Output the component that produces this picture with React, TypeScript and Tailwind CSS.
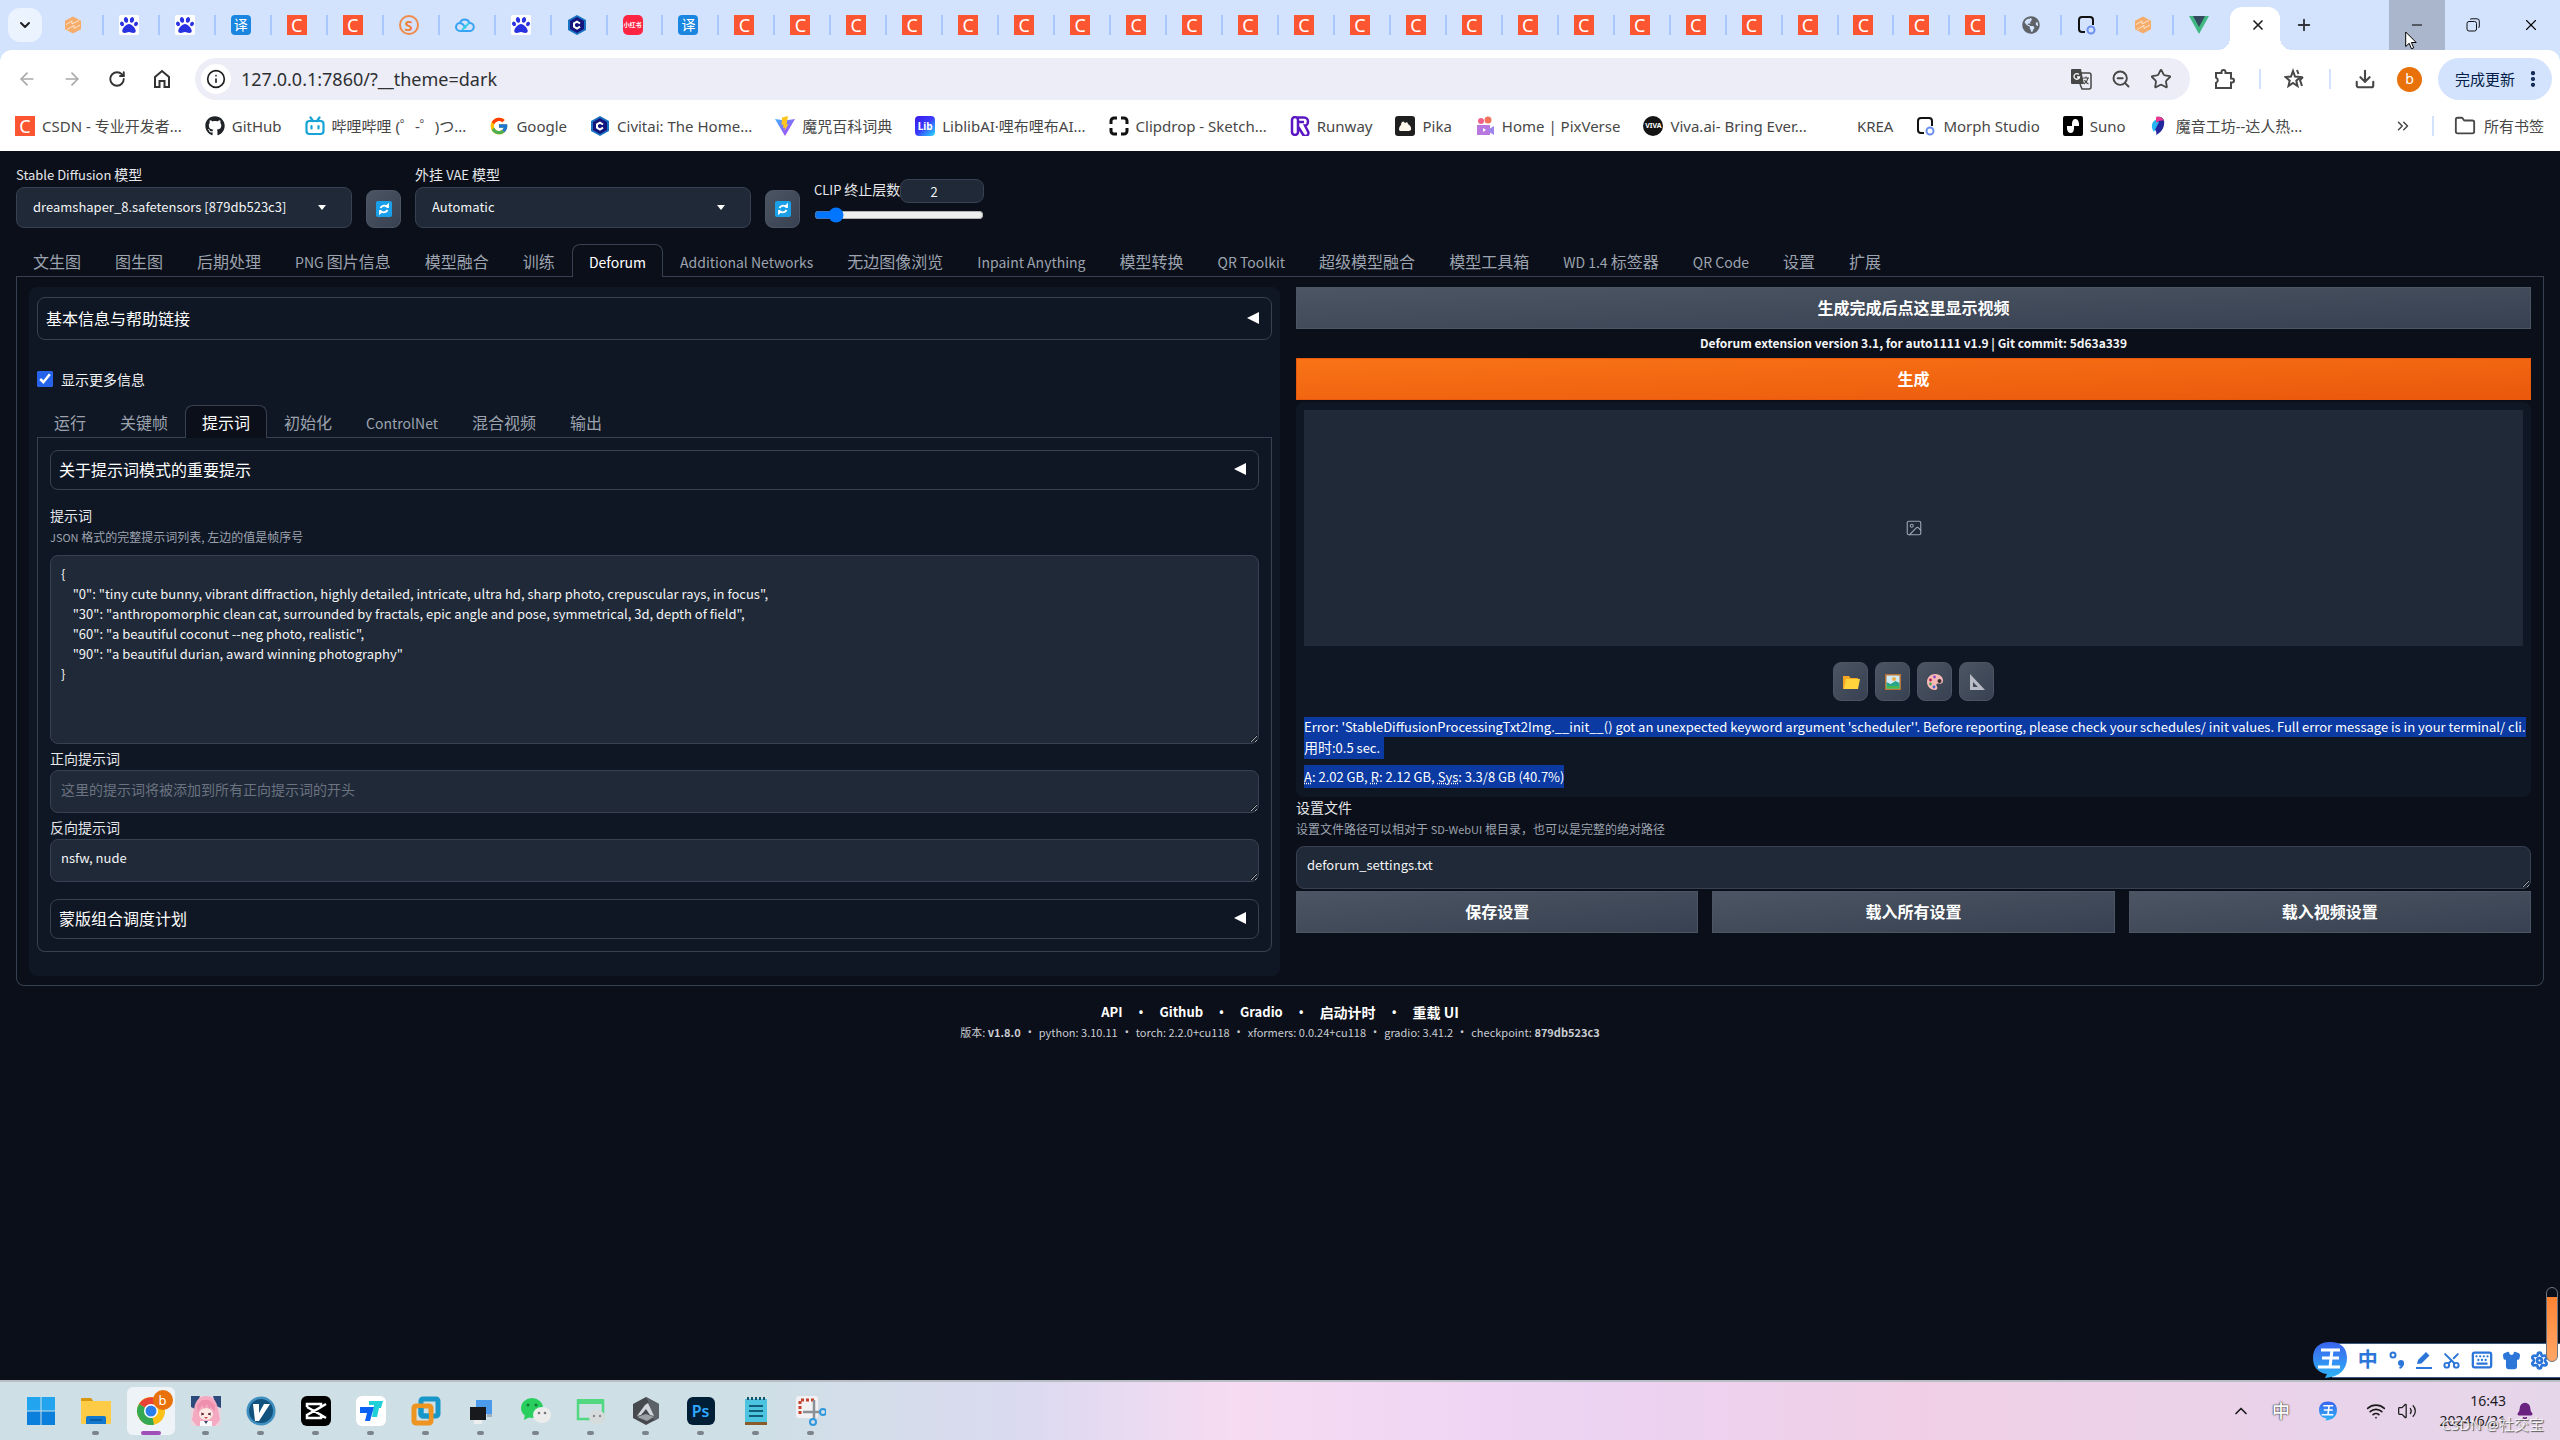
import { useState } from "react";
import type { ReactNode } from "react";
import {
  ArrowLeft,
  ArrowRight,
  Bell,
  ChevronDown,
  ChevronUp,
  ChevronsRight,
  Download,
  EllipsisVertical,
  Folder,
  Image as ImageIcon,
  Info,
  Keyboard,
  Minus,
  Plus,
  RotateCw,
  Scissors,
  Settings,
  Shirt,
  Star,
  Volume2,
  Wifi,
  X,
  ZoomOut,
} from "lucide-react";
import { FaGithub, FaPaw, FaGlobeAmericas } from "react-icons/fa";
import { FcGoogle } from "react-icons/fc";

/* ---------- favicons ---------- */

const CsdnIcon = () => (
  <span className="flex size-5 items-center justify-center bg-[#fc5531] text-[18px] leading-5 text-white">C</span>
);

const BaiduIcon = () => (
  <span className="flex size-5 items-center justify-center rounded-xs bg-white">
    <FaPaw className="size-[18px] text-[#2932e1]" />
  </span>
);

const TranslateFavicon = () => (
  <span className="flex size-5 items-center justify-center rounded-sm bg-[#1a86e0] text-[14px] leading-5 text-white">译</span>
);

const SIcon = () => (
  <span className="flex size-5 items-center justify-center rounded-full border-2 border-[#f08a4b] text-[15px] leading-4 font-bold text-[#f0813c]">S</span>
);

const OrangeHexIcon = () => (
  <svg viewBox="0 0 20 20" className="size-5">
    <path d="M10 1.500l8 4.300v8.400l-8 4.300-8-4.300V5.800z" fill="#f6ad6b" />
    <path d="M3 9.500l6-3.500v3l7-3.500M4 14.500l7-4v3l6-3.500" stroke="#fbe3cc" strokeWidth="1" fill="none" />
  </svg>
);

const CloudIcon = () => (
  <svg viewBox="0 0 20 20" className="size-5" fill="none" strokeWidth="2">
    <path d="M5 8a5 5 0 0 1 9.500 0a4 4 0 0 1 .5 8H5a4 4 0 0 1 0-8c3 0 4 3 6 5" stroke="#38a3f5" />
    <path d="M7 15l7-7" stroke="#35d0e6" />
  </svg>
);

const CivitaiIcon = () => (
  <svg viewBox="0 0 20 20" className="size-5">
    <path d="M10 0l9 5v10l-9 5-9-5V5z" fill="#1971c2" />
    <path d="M10 2l7 4v8l-7 4-7-4V6z" fill="#14157c" />
    <path d="M13 8.500L10 6.600 7 8.400v3.300l3 1.800 3-1.900" stroke="#fff" strokeWidth="2" fill="none" />
  </svg>
);

const RedBookIcon = () => (
  <span className="flex size-5 items-center justify-center rounded-[5px] bg-[#ff2442] text-[6px] leading-5 font-bold text-white">小红书</span>
);

const MorphIcon = () => (
  <svg viewBox="0 0 20 20" className="size-5" fill="none">
    <path d="M8 17H5a3 3 0 0 1-3-3V5a3 3 0 0 1 3-3h8a3 3 0 0 1 3 3v5" stroke="#111" strokeWidth="2" />
    <circle cx="14" cy="15" r="3.500" stroke="#6c8ff0" strokeWidth="2" />
  </svg>
);

const VueIcon = () => (
  <svg viewBox="0 0 20 20" className="size-5">
    <path d="M0 1h20L10 19z" fill="#41b883" />
    <path d="M4 1h12l-6 11z" fill="#35495e" />
  </svg>
);

const BilibiliIcon = () => (
  <svg viewBox="0 0 20 20" className="size-5" fill="none" stroke="#17a3d6" strokeWidth="2.200" strokeLinecap="round">
    <rect x="1.500" y="5" width="17" height="13" rx="3" />
    <path d="M5.500 1.500L8 5M14.500 1.500L12 5M6.500 10v2.500M13.500 10v2.500" />
  </svg>
);

const ViteIcon = () => (
  <svg viewBox="0 0 20 20" className="size-5">
    <defs>
      <linearGradient id="vite" x1="0" y1="0" x2="1" y2="1">
        <stop offset="0" stopColor="#41b1ff" />
        <stop offset="1" stopColor="#bd34fe" />
      </linearGradient>
    </defs>
    <path d="M0 3l10 1.500L20 3 10 20z" fill="url(#vite)" />
    <path d="M13 0L7 1.500 6.500 9l2-.5L8 12l2-.5L9.500 15l4-7-2 .5z" fill="#ffc51f" />
  </svg>
);

const LibIcon = () => (
  <span className="flex size-5 items-center justify-center rounded-sm bg-linear-to-br from-[#3a16e8] via-[#3b3bff] to-[#35d6ff] text-[10px] leading-5 font-bold text-white">Lib</span>
);

const ClipdropIcon = () => (
  <svg viewBox="0 0 20 20" className="size-5" fill="none" stroke="#111" strokeWidth="3">
    <path d="M2 8V5a3 3 0 0 1 3-3h3M12 2h3a3 3 0 0 1 3 3v3M18 12v3a3 3 0 0 1-3 3h-3M8 18H5a3 3 0 0 1-3-3v-3" />
  </svg>
);

const RunwayIcon = () => (
  <svg viewBox="0 0 20 20" className="size-5" fill="none" stroke="#5b17c4" strokeWidth="2.500">
    <path d="M2 4a3 3 0 0 1 6 0v12a3 3 0 0 1-6 0zM6 1.500h8a4 4 0 0 1 4 4c0 3-2 4-3 4l3 6a2.500 2.500 0 0 1-5 3l-5-8M8 6h6" />
  </svg>
);

const PikaIcon = () => (
  <svg viewBox="0 0 20 20" className="size-5">
    <rect width="20" height="20" rx="3" fill="#1f1f1f" />
    <path d="M4 14c0-3 1-4 2-5 0-2 1-3.500 2.500-3.500L10 7l2-1 1.500 2.500c2 1 3 3 2.500 5.500l-2 1H5z" fill="#fff6ec" />
  </svg>
);

const PixVerseIcon = () => (
  <svg viewBox="0 0 20 20" className="size-5">
    <circle cx="6" cy="5" r="3" fill="#f0628a" />
    <circle cx="13" cy="4" r="3.500" fill="#f2745e" />
    <path d="M2 9h13v10H2z" fill="#b778e0" />
    <path d="M14 13l5-3v9l-5-3z" fill="#9c86ec" />
    <path d="M8 12l3 2-3 2z" fill="#fff" />
  </svg>
);

const VivaIcon = () => (
  <span className="flex size-5 items-center justify-center rounded-full bg-[#141414] text-[7px] leading-5 font-bold text-white">VIVA</span>
);

const SunoIcon = () => (
  <svg viewBox="0 0 20 20" className="size-5">
    <rect width="20" height="20" rx="2" fill="#000" />
    <path d="M9 10V8c0-3 1-5 3.500-5S16 6 16 8v2zM4 10h7v2c0 3-1 5-3.500 5S4 14 4 12z" fill="#fff" />
  </svg>
);

const MoyinIcon = () => (
  <svg viewBox="0 0 20 20" className="size-5">
    <path d="M8 1c6-1 8 3 7 8s-4 8-8 10c2-5-4-6-2-10z" fill="#21279c" />
    <path d="M6 4c-4 3-4 8-1 12l5-10z" fill="#25b5f2" />
    <path d="M7 1c5-1 7 1 8 4-3-1-6 0-8 2z" fill="#e8388f" />
  </svg>
);

const TABS: (() => ReactNode)[] = [
  OrangeHexIcon,
  BaiduIcon,
  BaiduIcon,
  TranslateFavicon,
  CsdnIcon,
  CsdnIcon,
  SIcon,
  CloudIcon,
  BaiduIcon,
  CivitaiIcon,
  RedBookIcon,
  TranslateFavicon,
  ...Array.from({ length: 23 }, () => CsdnIcon),
  () => <FaGlobeAmericas className="size-[18px] text-[#5f6368]" />,
  MorphIcon,
  OrangeHexIcon,
  VueIcon,
];

const BOOKMARKS: { label: string; icon: () => ReactNode }[] = [
  { label: "CSDN - 专业开发者...", icon: CsdnIcon },
  { label: "GitHub", icon: () => <FaGithub className="size-5 text-[#1f2328]" /> },
  { label: "哔哩哔哩 (゜-゜)つ...", icon: BilibiliIcon },
  { label: "Google", icon: () => <FcGoogle className="size-5" /> },
  { label: "Civitai: The Home...", icon: CivitaiIcon },
  { label: "魔咒百科词典", icon: ViteIcon },
  { label: "LiblibAI·哩布哩布AI...", icon: LibIcon },
  { label: "Clipdrop - Sketch...", icon: ClipdropIcon },
  { label: "Runway", icon: RunwayIcon },
  { label: "Pika", icon: PikaIcon },
  { label: "Home | PixVerse", icon: PixVerseIcon },
  { label: "Viva.ai- Bring Ever...", icon: VivaIcon },
  { label: "KREA", icon: () => <span className="size-5" /> },
  { label: "Morph Studio", icon: MorphIcon },
  { label: "Suno", icon: SunoIcon },
  { label: "魔音工坊--达人热...", icon: MoyinIcon },
];

/* ---------- browser chrome ---------- */

function TabStrip() {
  return (
    <div className="flex h-[50px] items-stretch bg-[#d3e3fd]">
      <button className="ml-2 flex size-[34px] items-center justify-center self-center rounded-xl bg-[#ebf3fe]" aria-label="搜索标签页">
        <ChevronDown className="size-4 text-[#1f1f1f]" strokeWidth={3} />
      </button>
      <div className="ml-1.5 flex flex-1 items-center">
        {TABS.map((Icon, i) => (
          <button
            key={i}
            className={`flex h-5 flex-1 items-center justify-center border-r-2 pr-1 ${
              i === TABS.length - 1 ? "border-transparent" : "border-[#a8c7fa]"
            }`}
            aria-label={`标签页 ${i + 1}`}
          >
            <Icon />
          </button>
        ))}
      </div>
      <div className="relative mt-[7px] flex w-[50px] items-center justify-end rounded-t-xl bg-white pr-3.5 pb-[7px]">
        <span className="absolute bottom-0 -left-3 size-3 bg-[radial-gradient(circle_at_0_0,transparent_12px,white_12px)]" />
        <span className="absolute -right-3 bottom-0 size-3 bg-[radial-gradient(circle_at_100%_0,transparent_12px,white_12px)]" />
        <button aria-label="关闭标签页">
          <X className="size-4 text-[#1f1f1f]" strokeWidth={2.5} />
        </button>
      </div>
      <button className="flex w-12 items-center justify-center" aria-label="新标签页">
        <Plus className="size-[18px] text-[#30353b]" strokeWidth={2.5} />
      </button>
      <div className="ml-[61px] flex">
        <button className="flex w-14 items-center justify-center bg-[#a9b6cb]" aria-label="最小化">
          <Minus className="size-4 text-black" strokeWidth={1.5} />
        </button>
        <button className="flex w-14 items-center justify-center" aria-label="还原">
          <svg viewBox="0 0 14 14" className="size-3.5" fill="none" stroke="#111">
            <rect x="1" y="3.500" width="9.500" height="9.500" rx="2" />
            <path d="M4 1.500C4.500 1 5 .8 6 .8h5a2.300 2.300 0 0 1 2.300 2.300V8c0 1-.3 1.500-.8 2" />
          </svg>
        </button>
        <button className="flex w-[59px] items-center justify-center" aria-label="关闭">
          <X className="size-[18px] text-black" strokeWidth={1.5} />
        </button>
      </div>
    </div>
  );
}

const NAV_ICON = "flex h-10 w-[45px] items-center justify-center";
const BAR_ICON = "flex size-10 items-center justify-center text-[#474747]";

function Toolbar() {
  return (
    <div className="bg-[#d3e3fd]">
      <div className="flex h-[58px] items-center rounded-t-xl bg-white pl-1">
        <button className={NAV_ICON} aria-label="后退"><ArrowLeft className="size-5 text-[#a9a9a9]" /></button>
        <button className={NAV_ICON} aria-label="前进"><ArrowRight className="size-5 text-[#a9a9a9]" /></button>
        <button className={NAV_ICON} aria-label="重新加载"><RotateCw className="size-[18px] text-[#333]" strokeWidth={2.5} /></button>
        <button className={NAV_ICON} aria-label="主页">
          <svg viewBox="0 0 20 20" className="size-5" fill="none" stroke="#333" strokeWidth="2">
            <path d="M3 8l7-6 7 6v10h-4.500v-6h-5v6H3z" />
          </svg>
        </button>

        <div className="ml-[11px] flex h-[42px] flex-1 items-center rounded-full bg-[#ededf7] pr-[9px] pl-1.5">
          <span className="flex size-[30px] items-center justify-center rounded-full bg-white">
            <Info className="size-5 text-[#1f1f1f]" />
          </span>
          <input
            className="ml-2.5 flex-1 bg-transparent text-[18px] leading-6 text-[#2e3033] outline-none"
            defaultValue="127.0.0.1:7860/?__theme=dark"
            aria-label="地址和搜索栏"
          />
          <button className={BAR_ICON} aria-label="翻译">
            <svg viewBox="0 0 22 22" className="size-[22px]">
              <path d="M2 1h9l3 15H2a1 1 0 0 1-1-1V2a1 1 0 0 1 1-1z" fill="#474747" />
              <path d="M11 5h8a2 2 0 0 1 2 2v12a2 2 0 0 1-2 2h-7l-2-5" fill="none" stroke="#474747" strokeWidth="1.500" />
              <path d="M8.800 6.500A2.800 2.800 0 1 0 9.500 9H7" fill="none" stroke="#fff" strokeWidth="1.300" />
              <path d="M13 10h6M16 8.500V10M18 10c-.5 3-2 4.500-4 6M14.500 12c1 2 2 3 4 4" fill="none" stroke="#474747" strokeWidth="1.200" />
            </svg>
          </button>
          <button className={BAR_ICON} aria-label="缩放"><ZoomOut className="size-5" strokeWidth={2.3} /></button>
          <button className={BAR_ICON} aria-label="为此标签页添加书签">
            <Star className="size-[22px]" strokeLinejoin="miter" />
          </button>
        </div>

        <button className={`${BAR_ICON} ml-[15px]`} aria-label="扩展程序">
          <svg viewBox="0 0 22 22" className="size-[22px]" fill="none" stroke="currentColor" strokeWidth="2">
            <path d="M2 5h5.500V4a2 2 0 0 1 4 0v1H17v5.500h1a2 2 0 0 1 0 4h-1V20H2v-5a3 3 0 0 0 0-5.500z" />
          </svg>
        </button>
        <span className="mx-3.5 h-5 w-0.5 bg-[#d3e3fd]" />
        <button className={BAR_ICON} aria-label="收藏">
          <svg viewBox="0 0 22 22" className="size-[22px]" fill="none" stroke="currentColor" strokeWidth="2">
            <path d="M9 3l2 5.500 5.500.5-4.200 3.700L13.500 18 9 15l-4.500 3 1.200-5.300L1.500 9 7 8.500z" />
            <path d="M13 2l1.500 4M19 9l-3 3 2 6" />
          </svg>
        </button>
        <span className="mx-3.5 h-5 w-0.5 bg-[#d3e3fd]" />
        <button className={BAR_ICON} aria-label="下载内容"><Download className="size-[22px]" strokeWidth={2.3} /></button>
        <button className="ml-3 size-[25px] rounded-full bg-[#e8710a] text-[14px] leading-6 text-white" aria-label="个人资料">b</button>
        <button className="mr-2 ml-4 flex h-[42px] w-[114px] items-center justify-center gap-2 rounded-full bg-[#d3e3fd] text-[15px] leading-5 text-[#041e49]">
          完成更新
          <EllipsisVertical className="-mr-2 size-5" strokeWidth={3} />
        </button>
      </div>
    </div>
  );
}

function BookmarksBar() {
  return (
    <nav className="flex h-[43px] items-center bg-white pr-4 pb-[7px] pl-[15px] text-[15px] leading-5 text-[#474747]">
      <div className="flex flex-1 items-center gap-[23px]">
        {BOOKMARKS.map(({ label, icon: Icon }) => (
          <a key={label} href="#" className="flex items-center gap-[7px] whitespace-nowrap">
            <Icon />
            {label}
          </a>
        ))}
      </div>
      <button aria-label="更多书签"><ChevronsRight className="size-[18px]" /></button>
      <span className="mx-5 h-5 w-0.5 bg-[#d3e3fd]" />
      <a href="#" className="flex items-center gap-2 whitespace-nowrap">
        <Folder className="size-[22px]" />
        所有书签
      </a>
    </nav>
  );
}

/* ---------- web ui ---------- */

const MAIN_TABS = [
  "文生图",
  "图生图",
  "后期处理",
  "PNG 图片信息",
  "模型融合",
  "训练",
  "Deforum",
  "Additional Networks",
  "无边图像浏览",
  "Inpaint Anything",
  "模型转换",
  "QR Toolkit",
  "超级模型融合",
  "模型工具箱",
  "WD 1.4 标签器",
  "QR Code",
  "设置",
  "扩展",
];

const DEFORUM_TABS = ["运行", "关键帧", "提示词", "初始化", "ControlNet", "混合视频", "输出"];

const PROMPTS = `{
    "0": "tiny cute bunny, vibrant diffraction, highly detailed, intricate, ultra hd, sharp photo, crepuscular rays, in focus",
    "30": "anthropomorphic clean cat, surrounded by fractals, epic angle and pose, symmetrical, 3d, depth of field",
    "60": "a beautiful coconut --neg photo, realistic",
    "90": "a beautiful durian, award winning photography"
}`;

const LABEL = "block pb-1 text-sm leading-4 text-gray-200";
const FIELD =
  "block w-full resize-y rounded-lg border border-[#374151] bg-[#1f2937] px-2.5 pt-2 leading-5 text-gray-100 placeholder:text-[#6b7280] outline-none";
const SECONDARY =
  "h-[42px] w-full border border-[#4b5563] bg-linear-to-br from-[#4b5563] to-[#374151] pb-0.5 text-base leading-6 font-semibold text-white";
const TOOL =
  "flex w-[35px] items-center justify-center rounded-lg border border-[#4b5563] bg-linear-to-br from-[#4b5563] to-[#374151]";

/* the CJK face draws its latin letters large, so latin runs are set smaller */
function Mixed({ text, latin }: { text: string; latin: string }) {
  return (
    <>
      {text.split(/([!-~][ -~]*)/).map((run, i) =>
        i % 2 ? (
          <span key={i} className={latin}>
            {run}
          </span>
        ) : (
          run
        )
      )}
    </>
  );
}

function TabNav({ tabs, initial }: { tabs: string[]; initial: string }) {
  const [active, setActive] = useState(initial);
  return (
    <div className="flex border-b border-[#374151]" role="tablist">
      {tabs.map((tab) => (
        <button
          key={tab}
          role="tab"
          aria-selected={tab === active}
          onClick={() => setActive(tab)}
          className={`-mb-px h-[33px] rounded-t-lg border border-b-0 px-4 text-base leading-6 whitespace-nowrap ${
            tab === active ? "border-[#374151] bg-[#0b0f19] text-white" : "border-transparent text-[#9ca3af]"
          }`}
        >
          <Mixed text={tab} latin="text-sm" />
        </button>
      ))}
    </div>
  );
}

function Accordion({ title, className }: { title: string; className: string }) {
  return (
    <button className={`flex w-full items-center justify-between rounded-lg border border-[#374151] px-2 pb-0.5 text-base leading-6 text-white ${className}`}>
      {title}
      <svg viewBox="0 0 12 12" className="mr-1 size-3">
        <path d="M12 0v12L0 6z" fill="#fff" />
      </svg>
    </button>
  );
}

function ModelSelect({ id, label, value }: { id: string; label: string; value: string }) {
  return (
    <div className="flex items-end gap-[14px]">
      <div className="w-[336px]">
        <label htmlFor={id} className={LABEL}>
          <Mixed text={label} latin="text-[13px]" />
        </label>
        <div className="relative">
          <select
            id={id}
            className="block h-[41px] w-full appearance-none rounded-lg border border-[#374151] bg-[#1f2937] px-4 pb-0.5 text-[13px] leading-5 text-gray-100"
          >
            <option>{value}</option>
          </select>
          <svg viewBox="0 0 8 5" className="pointer-events-none absolute top-[18px] right-[26px] h-[5px] w-2">
            <path d="M0 0h8L4 5z" fill="#fff" />
          </svg>
        </div>
      </div>
      <button className={`${TOOL} h-[38px]`} aria-label="刷新">
        <svg viewBox="0 0 16 16" className="size-4">
          <rect width="16" height="16" rx="2" fill="#1aa0e8" />
          <path d="M12 7V4L10.500 5.500A4 4 0 0 0 4.500 7M4 9v3l1.500-1.500A4 4 0 0 0 11.500 9" fill="none" stroke="#fff" strokeWidth="1.800" />
        </svg>
      </button>
    </div>
  );
}

function QuickSettings() {
  const [clip, setClip] = useState(2);
  return (
    <div className="flex items-end gap-[14px] px-4 pt-[15px]">
      <ModelSelect id="sd-model" label="Stable Diffusion 模型" value="dreamshaper_8.safetensors [879db523c3]" />
      <ModelSelect id="vae-model" label="外挂 VAE 模型" value="Automatic" />
      <div className="w-[170px] pb-[5px]">
        <div className="flex items-center">
          <label htmlFor="clip" className="w-[86px] pb-1 text-sm leading-4 whitespace-nowrap text-gray-200">
            <Mixed text="CLIP 终止层数" latin="text-[13px]" />
          </label>
          <input
            className="h-6 w-[84px] rounded-lg border border-[#374151] bg-[#1f2937] pr-4 text-center text-[13px] leading-5 text-gray-100"
            value={clip}
            onChange={(e) => setClip(Number(e.target.value) || 1)}
            aria-label="CLIP 终止层数"
          />
        </div>
        <input
          id="clip"
          type="range"
          min={1}
          max={12}
          value={clip}
          onChange={(e) => setClip(Number(e.target.value))}
          className="mt-1 block h-4 w-full"
        />
      </div>
    </div>
  );
}

function PromptPanel() {
  return (
    <div className="rounded-b-lg border border-t-0 border-[#374151] p-3">
      <Accordion title="关于提示词模式的重要提示" className="h-10" />
      <label htmlFor="prompts" className={`${LABEL} mt-[17px]`}>提示词</label>
      <p className="text-xs leading-5 text-[#9ca3af]">
        <Mixed text="JSON" latin="text-[11px]" /> 格式的完整提示词列表, 左边的值是帧序号
      </p>
      <textarea id="prompts" className={`${FIELD} mt-2 h-[189px] text-[13px]`} defaultValue={PROMPTS} spellCheck={false} />
      <label htmlFor="positive" className={`${LABEL} mt-1.5`}>正向提示词</label>
      <textarea id="positive" className={`${FIELD} h-[43px] text-sm`} placeholder="这里的提示词将被添加到所有正向提示词的开头" />
      <label htmlFor="negative" className={`${LABEL} mt-1.5`}>反向提示词</label>
      <textarea id="negative" className={`${FIELD} h-[43px] text-[13px]`} defaultValue="nsfw, nude" spellCheck={false} />
      <Accordion title="蒙版组合调度计划" className="mt-[17px] h-10" />
    </div>
  );
}

/* folder, picture, palette and triangle shortcuts under the gallery */
const GALLERY_TOOLS = [
  {
    label: "打开输出目录",
    icon: (
      <svg viewBox="0 0 18 18" className="size-[18px]">
        <path d="M1 3h6l1.500 2H16v11H1z" fill="#f5a623" />
        <path d="M4 6h14l-2 10H2z" fill="#ffd33c" />
      </svg>
    ),
  },
  {
    label: "发送到图生图",
    icon: (
      <svg viewBox="0 0 18 18" className="size-[18px]">
        <rect x="1" y="1" width="16" height="16" fill="#b87333" />
        <rect x="2.500" y="2.500" width="13" height="13" fill="#cfeaf7" />
        <circle cx="10" cy="6" r="2" fill="#f3b04a" />
        <path d="M2.500 9l4 2 5-3 4 2v5.500h-13z" fill="#28a58a" />
        <path d="M2.500 13h13v2.500h-13z" fill="#47b84c" />
      </svg>
    ),
  },
  {
    label: "发送到重绘",
    icon: (
      <svg viewBox="0 0 18 18" className="size-[18px]">
        <path d="M9 1c5 0 8 3 8 6.500 0 3-2 3.500-4 3-3-.5-3 1.500-2 3s0 3.500-2 3.500c-5 0-8-4-8-8s3-8 8-8z" fill="#f6b9b4" />
        <circle cx="4.500" cy="7" r="1.400" fill="#b0174f" />
        <circle cx="8.500" cy="4" r="1.400" fill="#8d46c9" />
        <circle cx="4.500" cy="11" r="1.400" fill="#46a556" />
        <circle cx="8" cy="14" r="1.400" fill="#3d65dc" />
        <circle cx="13.500" cy="8" r="2" fill="#3a2c33" />
      </svg>
    ),
  },
  {
    label: "发送到后期处理",
    icon: (
      <svg viewBox="0 0 18 18" className="size-[18px]">
        <path d="M2 1l15 16H2zM5 9v5h5z" fill="#b9bcc6" fillRule="evenodd" />
      </svg>
    ),
  },
];

function OutputColumn() {
  return (
    <div className="min-w-0">
      <button className={SECONDARY}>生成完成后点这里显示视频</button>
      <p className="flex h-[29px] items-center justify-center pb-0.5 text-xs leading-5 font-semibold text-gray-100">
        Deforum extension version 3.1, for auto1111 v1.9 | Git commit: 5d63a339
      </p>
      <button className="h-[42px] w-full border border-[#ea580c] bg-linear-to-br from-[#f97316] to-[#ea580c] pb-0.5 text-base leading-6 font-semibold text-white">
        生成
      </button>

      <div className="mt-0.5 rounded-lg bg-[#101724] px-2 pt-2 pb-[9px]">
        <div className="flex h-[236px] items-center justify-center bg-[#1f2937]">
          <ImageIcon className="size-[18px] text-[#9ca3af]" strokeWidth={1.5} />
        </div>
        <div className="mt-4 flex justify-center gap-[7px]">
          {GALLERY_TOOLS.map((tool) => (
            <button key={tool.label} aria-label={tool.label} className={`${TOOL} h-[39px]`}>
              {tool.icon}
            </button>
          ))}
        </div>
        <div className="mt-4 flex flex-col items-start text-[13px] whitespace-nowrap text-white">
          <p className="bg-[#0b3aa3] leading-5">
            Error: 'StableDiffusionProcessingTxt2Img.__init__() got an unexpected keyword argument 'scheduler''. Before
            reporting, please check your schedules/ init values. Full error message is in your terminal/ cli.
          </p>
          <p className="bg-[#0b3aa3] pr-1 leading-[22px]">
            <span className="text-sm">用时</span>:0.5 sec.
          </p>
          <p className="mt-1.5 bg-[#0b3aa3] leading-[23px]">
            <abbr className="underline decoration-dotted">A</abbr>: 2.02 GB, <abbr className="underline decoration-dotted">R</abbr>: 2.12
            GB, <abbr className="underline decoration-dotted">Sys</abbr>: 3.3/8 GB (40.7%)
          </p>
        </div>
      </div>

      <label htmlFor="settings-file" className={`${LABEL} mt-0.5`}>设置文件</label>
      <p className="text-xs leading-5 text-[#9ca3af]">
        设置文件路径可以相对于 <Mixed text="SD-WebUI" latin="text-[11px]" /> 根目录，也可以是完整的绝对路径
      </p>
      <textarea
        id="settings-file"
        className={`${FIELD} mt-[7px] h-[43px] text-[13px]`}
        defaultValue="deforum_settings.txt"
        spellCheck={false}
      />
      <div className="mt-0.5 grid grid-cols-3 gap-[14px]">
        <button className={SECONDARY}>保存设置</button>
        <button className={SECONDARY}>载入所有设置</button>
        <button className={SECONDARY}>载入视频设置</button>
      </div>
    </div>
  );
}

const Dot = () => <span className="font-['Noto_Sans',sans-serif]">•</span>;

function WebUi() {
  return (
    <main className="flex-1 bg-[#0b0f19] font-['Noto_Sans_CJK_SC',sans-serif]">
      <QuickSettings />
      <div className="mx-4 mt-4">
        <TabNav tabs={MAIN_TABS} initial="Deforum" />
        <div className="grid grid-cols-[1251fr_1235fr] gap-4 rounded-b-lg border border-t-0 border-[#374151] px-3 pt-2.5 pb-[9px]">
          <div className="rounded-lg bg-[#101724] px-2 pt-2.5 pb-6">
            <Accordion title="基本信息与帮助链接" className="h-[43px]" />
            <label className="mt-[29px] mb-4 flex items-center gap-2 text-sm leading-5 text-gray-100">
              <input type="checkbox" defaultChecked className="size-4 accent-[#2563eb]" />
              显示更多信息
            </label>
            <TabNav tabs={DEFORUM_TABS} initial="提示词" />
            <PromptPanel />
          </div>
          <OutputColumn />
        </div>
      </div>

      <footer className="mt-4 text-center text-white">
        <div className="flex justify-center gap-4 text-[13px] leading-5 font-semibold">
          <a href="#">API</a>
          <Dot />
          <a href="#">Github</a>
          <Dot />
          <a href="#">Gradio</a>
          <Dot />
          <a href="#" className="text-sm leading-5">启动计时</a>
          <Dot />
          <a href="#" className="text-sm leading-5">重载 UI</a>
        </div>
        <div className="flex justify-center gap-[7px] text-[11px] leading-5 text-[#c9ccd2]">
          <span>版本: <b>v1.8.0</b></span>
          <Dot />
          <span>python: 3.10.11</span>
          <Dot />
          <span>torch: 2.2.0+cu118</span>
          <Dot />
          <span>xformers: 0.0.24+cu118</span>
          <Dot />
          <span>gradio: 3.41.2</span>
          <Dot />
          <span>checkpoint: <b>879db523c3</b></span>
        </div>
      </footer>
    </main>
  );
}

/* ---------- desktop ---------- */

const APPS: { name: string; icon: ReactNode; running?: boolean; active?: boolean }[] = [
  {
    name: "开始",
    icon: (
      <svg viewBox="0 0 30 30" className="size-[30px]">
        <path d="M1 1h13.500v13.500H1zM15.500 1H29v13.500H15.500z" fill="#23a4ee" />
        <path d="M1 15.500h13.500V29H1zM15.500 15.500H29V29H15.500z" fill="#0a7fdb" />
      </svg>
    ),
  },
  {
    name: "文件资源管理器",
    running: true,
    icon: (
      <svg viewBox="0 0 30 30" className="size-[30px]">
        <path d="M0 3a1 1 0 0 1 1-1h9l3 4H0z" fill="#d9960f" />
        <path d="M0 5h29a1 1 0 0 1 1 1v21a1 1 0 0 1-1 1H1a1 1 0 0 1-1-1z" fill="#fdcb45" />
        <path d="M5 28v-6a2 2 0 0 1 2-2h16a2 2 0 0 1 2 2v6z" fill="#1277cf" />
        <path d="M9 24h12" stroke="#0c5ba5" strokeWidth="2" />
      </svg>
    ),
  },
  {
    name: "Google Chrome",
    active: true,
    icon: (
      <svg viewBox="0 0 30 30" className="size-[30px]">
        <circle cx="15" cy="15" r="14" fill="#fbc116" />
        <path d="M15 15L3 8a14 14 0 0 1 24 0z" fill="#ea4335" />
        <path d="M15 15l3 13.700A14 14 0 0 1 3 8z" fill="#34a853" />
        <path d="M15 15L27 8H15z" fill="#ea4335" />
        <circle cx="15" cy="15" r="7" fill="#fff" />
        <circle cx="15" cy="15" r="5.500" fill="#2b7de9" />
      </svg>
    ),
  },
  {
    name: "二次元",
    running: true,
    icon: (
      <svg viewBox="0 0 30 30" className="size-[30px]">
        <rect width="30" height="30" rx="2" fill="#e9d3df" />
        <path d="M0 0h9L4 13 0 11zM22 0h8v12l-5-2z" fill="#2c4a7c" />
        <path d="M3 14C4 3 10 0 15 0s11 3 12 14l2 10-5 6H6l-5-6z" fill="#f4a9c0" />
        <ellipse cx="15" cy="18" rx="7" ry="6" fill="#fdeae4" />
        <path d="M7 17c1-4 3-7 5-8l1 4 3-5 2 5 2-2c2 2 3 4 3 6l1-8-6-5H11L6 9z" fill="#ef8fae" />
        <path d="M10 17l3 1-3 1M20 17l-3 1 3 1" stroke="#6b2a3d" fill="none" />
        <path d="M13 21h4l-2 2z" fill="#cf3f55" />
        <path d="M9 25h12v5H9z" fill="#f8f8fb" />
        <path d="M13 25l2 3 2-3" fill="#32486e" />
      </svg>
    ),
  },
  {
    name: "V",
    running: true,
    icon: (
      <svg viewBox="0 0 30 30" className="size-[30px]">
        <circle cx="15" cy="15" r="14.500" fill="#3f8fc0" />
        <circle cx="15" cy="15" r="12" fill="#12527f" />
        <path d="M7 8h6v9l5-9h6L13 25H9z" fill="#fff" />
      </svg>
    ),
  },
  {
    name: "剪映",
    running: true,
    icon: (
      <svg viewBox="0 0 30 30" className="size-[30px]">
        <rect width="30" height="30" rx="6" fill="#000" />
        <path d="M6 11V8h14v3L6 19v3h14v-3L6 11M20 11l5-3M20 19l5 3" fill="none" stroke="#fff" strokeWidth="2.500" />
      </svg>
    ),
  },
  {
    name: "ToDesk",
    running: true,
    icon: (
      <svg viewBox="0 0 30 30" className="size-[30px]">
        <rect width="30" height="30" rx="6" fill="#fff" />
        <path d="M13 5h14l-2 7h-2l-2 9h-5l2-12h-5z" fill="#1fd0d8" />
        <path d="M4 11h14l-4 14H9l2-8H4z" fill="#0a62f5" />
      </svg>
    ),
  },
  {
    name: "VMware",
    running: true,
    icon: (
      <svg viewBox="0 0 30 30" className="size-[30px]" fill="none" strokeWidth="5">
        <rect x="10" y="3" width="17" height="17" rx="2" stroke="#1a97c9" />
        <rect x="3" y="10" width="17" height="17" rx="2" stroke="#ee9420" />
        <path d="M10 12v6a2 2 0 0 0 2 2h6" stroke="#1a97c9" />
      </svg>
    ),
  },
  {
    name: "远程桌面",
    running: true,
    icon: (
      <svg viewBox="0 0 30 30" className="size-[30px]">
        <path d="M10 4h16v14H10z" fill="#4b9aec" />
        <path d="M21 18h5v3h-5z" fill="#9fb0c0" />
        <path d="M4 11h16v13H4z" fill="#17191c" />
        <path d="M8 24h8v4H8z" fill="#eceef0" />
      </svg>
    ),
  },
  {
    name: "微信",
    running: true,
    icon: (
      <svg viewBox="0 0 30 30" className="size-[30px]">
        <ellipse cx="11" cy="12" rx="11" ry="10" fill="#28cf5e" />
        <path d="M4 18l-1 6 6-3z" fill="#28cf5e" />
        <circle cx="7" cy="9" r="1.500" fill="#0e7a33" />
        <circle cx="15" cy="9" r="1.500" fill="#0e7a33" />
        <ellipse cx="21" cy="19" rx="9" ry="8" fill="#ececec" />
        <circle cx="18" cy="17" r="1.300" fill="#777" />
        <circle cx="24" cy="17" r="1.300" fill="#777" />
      </svg>
    ),
  },
  {
    name: "微信窗口",
    running: true,
    icon: (
      <svg viewBox="0 0 30 30" className="size-[30px]">
        <path d="M2 5h25v18H2z" fill="none" stroke="#53d882" strokeWidth="2.500" />
        <path d="M1 3h27v5H1z" fill="#53d882" />
        <ellipse cx="21" cy="21" rx="8" ry="7" fill="#d8dbdb" />
        <circle cx="18" cy="20" r="1.200" fill="#888" />
        <circle cx="24" cy="20" r="1.200" fill="#888" />
      </svg>
    ),
  },
  {
    name: "启动器",
    running: true,
    icon: (
      <svg viewBox="0 0 30 30" className="size-[30px]">
        <path d="M15 1l13 7v14l-13 7-13-7V8z" fill="#46494e" />
        <path d="M15 1l13 7v14l-5 3-6-20z" fill="#5d6268" />
        <path d="M14 9l3-2 6 13-4-1-4-6-5 6-4 1z" fill="#d3d7db" />
        <path d="M6 21l9-3 8 3-7 4z" fill="#9aa0a6" />
      </svg>
    ),
  },
  {
    name: "Photoshop",
    running: true,
    icon: (
      <span className="flex size-[28px] items-center justify-center rounded-md bg-[#001e36] text-[16px] leading-7 font-semibold text-[#31a8ff]">Ps</span>
    ),
  },
  {
    name: "记事本",
    running: true,
    icon: (
      <svg viewBox="0 0 30 30" className="size-[30px]">
        <path d="M4 3h22v23H4z" fill="#4cc3df" />
        <path d="M4 26h22v3H4z" fill="#8a5a2b" />
        <path d="M7 1v3M11 1v3M15 1v3M19 1v3M23 1v3" stroke="#15536b" strokeWidth="2" />
        <path d="M8 10h14M8 15h14M8 20h14" stroke="#115e78" strokeWidth="2" />
      </svg>
    ),
  },
  {
    name: "截图工具",
    running: true,
    icon: (
      <svg viewBox="0 0 30 30" className="size-[30px]" fill="none">
        <rect x="0" y="0" width="22" height="22" rx="3" fill="#f1f1f3" />
        <path d="M4 18V4h14" stroke="#c5402c" strokeWidth="3" strokeDasharray="3 2" />
        <path d="M18 4v18M7 16h17" stroke="#8b9096" strokeWidth="2.500" />
        <circle cx="17" cy="26" r="3" stroke="#2f97de" strokeWidth="2" />
        <circle cx="27" cy="16" r="3" stroke="#2f97de" strokeWidth="2" />
      </svg>
    ),
  },
];

const ImeLogo = ({ className }: { className: string }) => (
  <svg viewBox="0 0 36 38" className={className}>
    <defs>
      <linearGradient id="ime" x1="0" y1="0" x2="0" y2="1">
        <stop offset="0" stopColor="#3a63ee" />
        <stop offset="1" stopColor="#2fb4f7" />
      </linearGradient>
    </defs>
    <path d="M18 1c11 0 17 6 17 16 0 12-8 19-22 20l2-4C6 32 1 26 1 17 1 7 7 1 18 1z" fill="url(#ime)" />
    <path d="M9 9h19M10 17h17M6 26h22M20 9l-2 17" stroke="#fff" strokeWidth="3" fill="none" />
  </svg>
);

function ImeBar() {
  return (
    <div className="absolute right-0 bottom-[61px] flex h-[38px] w-[248px] items-center text-[#2b76d8]">
      <ImeLogo className="z-10 h-[38px] w-9" />
      <div className="-ml-4 flex h-[35px] flex-1 items-center justify-around border-y border-[#3a5a80] bg-white pr-1.5 pl-5">
        <button className="w-[22px] text-[20px] leading-6 font-bold">中</button>
        <button aria-label="标点">
          <svg viewBox="0 0 18 18" className="size-[18px]" fill="none" stroke="currentColor" strokeWidth="2">
            <circle cx="5" cy="4" r="2.500" />
            <circle cx="13" cy="12" r="2" fill="currentColor" />
            <path d="M15 12c0 2-1 4-3.500 5" />
          </svg>
        </button>
        <button aria-label="手写">
          <svg viewBox="0 0 18 18" className="size-[18px]" fill="currentColor">
            <path d="M2 13l1-4 8-8 3.500 3.500-8 8zM1 16h16v2H1z" />
          </svg>
        </button>
        <button aria-label="截图"><Scissors className="size-[19px] -rotate-90" strokeWidth={2.5} /></button>
        <button aria-label="软键盘"><Keyboard className="size-[22px]" strokeWidth={2.5} /></button>
        <button aria-label="皮肤"><Shirt className="size-[19px] fill-current" /></button>
        <button aria-label="设置"><Settings className="size-[19px]" strokeWidth={3.5} /></button>
      </div>
    </div>
  );
}

function Taskbar() {
  return (
    <footer className="flex h-[60px] items-center border-t-2 border-[#b9bec4] bg-[linear-gradient(90deg,#cfdfe6_0%,#cfdfe6_30%,#dbdaf0_40%,#f6dbf2_48%,#ecd3f3_62%,#f0cfe6_75%,#e9d3ea_90%,#e6d6ea_100%)]">
      <div className="ml-[13px] flex">
        {APPS.map((app) => (
          <button key={app.name} aria-label={app.name} className="flex w-[55px] justify-center">
            <span
              className={`relative flex h-12 w-12 flex-col items-center justify-center rounded-md ${
                app.active ? "bg-[#eef3f7]" : ""
              }`}
            >
              {app.icon}
              {app.active && (
                <span className="absolute top-[3px] right-0.5 size-5 rounded-full bg-[#e8710a] text-[13px] leading-5 text-white">b</span>
              )}
              {app.running && <span className="absolute bottom-0 h-1 w-[7px] rounded-full bg-[#7b848b]" />}
              {app.active && <span className="absolute bottom-0 h-1 w-5 rounded-full bg-[#a04fb8]" />}
            </span>
          </button>
        ))}
      </div>

      <div className="ml-auto flex items-center text-[#1b1b1b]">
        <button className="flex w-10 justify-center" aria-label="显示隐藏的图标"><ChevronUp className="size-5" /></button>
        <span className="w-10 text-center text-[18px] leading-6 font-medium text-white text-shadow-[0_0_2px_#222,0_0_1px_#222]">中</span>
        <span className="flex w-[54px] justify-center"><ImeLogo className="size-5" /></span>
        <span className="flex w-[42px] justify-center"><Wifi className="size-5" /></span>
        <span className="flex w-5 justify-center"><Volume2 className="size-5" strokeWidth={1.5} /></span>
        <div className="ml-[7px] w-[82px] text-right text-[14px] leading-5">
          <p>16:43</p>
          <p>2024/6/21</p>
        </div>
        <span className="mr-[26px] ml-2.5 flex"><Bell className="size-[18px] fill-[#6a2280] text-[#6a2280]" /></span>
      </div>
    </footer>
  );
}

export default function App() {
  return (
    <div className="relative flex min-h-screen flex-col overflow-hidden font-['Noto_Sans','Noto_Sans_CJK_SC',sans-serif]">
      <header>
        <TabStrip />
        <Toolbar />
        <BookmarksBar />
      </header>
      <WebUi />
      <Taskbar />

      <ImeBar />
      {/* floating level meter at the screen edge */}
      <div className="absolute right-0.5 bottom-[78px] h-[75px] w-3 rounded-full border border-[#6d7480] bg-linear-to-b from-[#0b0f19] from-12% via-[#ff8330] via-12% to-[#ffa766]" />
      <span className="absolute right-4 bottom-1.5 text-[15px] leading-5 text-white/80 text-shadow-[1px_1px_1px_#555]">CSDN @社交宝</span>
      {/* mouse pointer */}
      <svg viewBox="0 0 12 19" className="absolute top-[31px] right-[143px] h-[19px] w-3">
        <path d="M.7 1v14.500l3.500-3.200 2.300 5.500 2.200-1-2.300-5.300h4.800z" fill="#fff" stroke="#000" />
      </svg>
    </div>
  );
}
